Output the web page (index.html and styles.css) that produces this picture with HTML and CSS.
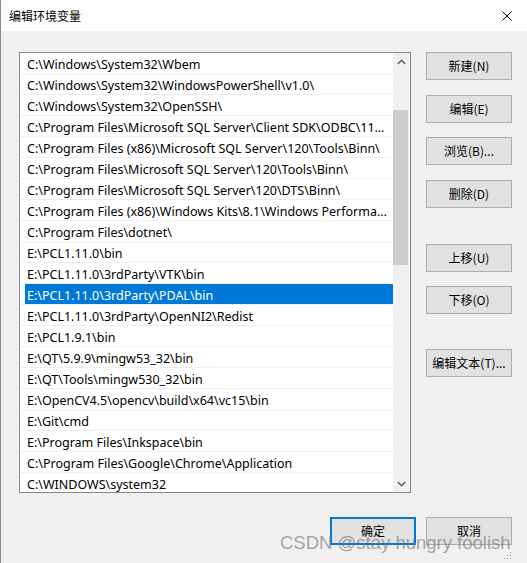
FILE: index.html
```html
<!DOCTYPE html>
<html lang="zh-CN">
<head>
<meta charset="utf-8">
<title>编辑环境变量</title>
<link rel="stylesheet" href="styles.css">
</head>
<body>
<div class="window">
  <div class="titlebar">
    <span class="title">编辑环境变量</span>
    <svg class="close" width="10" height="10" viewBox="0 0 10 10"><path d="M0.5 0.5 L9.5 9.5 M9.5 0.5 L0.5 9.5" stroke="#000" stroke-width="1" fill="none"/></svg>
  </div>
  <div class="content">
    <div class="main">
      <div class="listbox">
        <div class="rows">
          <div class="row"><div class="cell">C:\Windows\System32\Wbem</div></div>
          <div class="row"><div class="cell">C:\Windows\System32\WindowsPowerShell\v1.0\</div></div>
          <div class="row"><div class="cell">C:\Windows\System32\OpenSSH\</div></div>
          <div class="row"><div class="cell">C:\Program Files\Microsoft SQL Server\Client SDK\ODBC\110\Tools\Binn\</div></div>
          <div class="row"><div class="cell">C:\Program Files (x86)\Microsoft SQL Server\120\Tools\Binn\</div></div>
          <div class="row"><div class="cell">C:\Program Files\Microsoft SQL Server\120\Tools\Binn\</div></div>
          <div class="row"><div class="cell">C:\Program Files\Microsoft SQL Server\120\DTS\Binn\</div></div>
          <div class="row"><div class="cell">C:\Program Files (x86)\Windows Kits\8.1\Windows Performance Toolkit\</div></div>
          <div class="row"><div class="cell">C:\Program Files\dotnet\</div></div>
          <div class="row"><div class="cell">E:\PCL1.11.0\bin</div></div>
          <div class="row"><div class="cell">E:\PCL1.11.0\3rdParty\VTK\bin</div></div>
          <div class="row"><div class="cell selected">E:\PCL1.11.0\3rdParty\PDAL\bin</div></div>
          <div class="row"><div class="cell">E:\PCL1.11.0\3rdParty\OpenNI2\Redist</div></div>
          <div class="row"><div class="cell">E:\PCL1.9.1\bin</div></div>
          <div class="row"><div class="cell">E:\QT\5.9.9\mingw53_32\bin</div></div>
          <div class="row"><div class="cell">E:\QT\Tools\mingw530_32\bin</div></div>
          <div class="row"><div class="cell">E:\OpenCV4.5\opencv\build\x64\vc15\bin</div></div>
          <div class="row"><div class="cell">E:\Git\cmd</div></div>
          <div class="row"><div class="cell">E:\Program Files\Inkspace\bin</div></div>
          <div class="row"><div class="cell">C:\Program Files\Google\Chrome\Application</div></div>
          <div class="row"><div class="cell">C:\WINDOWS\system32</div></div>
        </div>
        <div class="scrollbar">
          <div class="arrow">
            <svg width="9" height="6" viewBox="0 0 9 6"><path d="M0.8 5 L4.5 1.3 L8.2 5" stroke="#606060" stroke-width="1.6" fill="none"/></svg>
          </div>
          <div class="track">
            <div class="thumb"></div>
          </div>
          <div class="arrow">
            <svg width="9" height="6" viewBox="0 0 9 6"><path d="M0.8 1 L4.5 4.7 L8.2 1" stroke="#606060" stroke-width="1.6" fill="none"/></svg>
          </div>
        </div>
      </div>
      <div class="side">
        <button class="btn">新建(N)</button>
        <button class="btn g15">编辑(E)</button>
        <button class="btn g14">浏览(B)...</button>
        <button class="btn g15">删除(D)</button>
        <button class="btn g36">上移(U)</button>
        <button class="btn g14">下移(O)</button>
        <button class="btn g35">编辑文本(T)...</button>
      </div>
    </div>
    <div class="footer">
      <button class="btn default">确定</button>
      <button class="btn">取消</button>
    </div>
  </div>
  <div class="watermark">CSDN @stay hungry foolish</div>
  <svg class="grip" width="8" height="8" viewBox="0 0 8 8">
    <rect x="6" y="0" width="1" height="1" fill="#a0a0a0"/>
    <rect x="3" y="3" width="1" height="1" fill="#a0a0a0"/>
    <rect x="6" y="3" width="1" height="1" fill="#a0a0a0"/>
    <rect x="0" y="6" width="1" height="1" fill="#a0a0a0"/>
    <rect x="3" y="6" width="1" height="1" fill="#a0a0a0"/>
    <rect x="6" y="6" width="1" height="1" fill="#a0a0a0"/>
  </svg>
</div>
</body>
</html>
```

FILE: styles.css
```css
* { box-sizing: border-box; }
html, body {
  margin: 0;
  padding: 0;
  background: #f0f0f0;
}
body {
  font-family: "Noto Sans", "Noto Sans CJK SC", sans-serif;
  font-size: 12px;
  color: #000;
}
.window {
  position: relative;
  width: 527px;
  height: 563px;
  background: #f0f0f0;
  border-left: 1px solid #8a8a8a;
  overflow: hidden;
}
.titlebar {
  height: 31px;
  background: #fff;
  display: flex;
  align-items: center;
  justify-content: space-between;
  padding: 0 15px 0 8px;
}
.title {
  font-family: "Noto Sans CJK SC", sans-serif;
  font-size: 12px;
  line-height: 16px;
}
.close { display: block; }
.content {
  padding: 21px 15px 0 18px;
}
.main {
  display: flex;
  gap: 15px;
}
.listbox {
  width: 392px;
  height: 441px;
  border: 1px solid #828790;
  background: #fff;
  display: flex;
  overflow: hidden;
}
.rows {
  flex: 1;
  min-width: 0;
}
.row {
  height: 21px;
  margin-left: 1px;
  border-bottom: 1px solid #ededed;
  display: flex;
}
.cell {
  flex: 1;
  min-width: 0;
  height: 20px;
  margin-left: 4px;
  padding: 3px 4px 0 2px;
  font-size: 12.5px;
  line-height: 17px;
  white-space: nowrap;
  overflow: hidden;
  text-overflow: ellipsis;
}
.cell.selected {
  background: #0078d7;
  color: #fff;
}
.scrollbar {
  width: 17px;
  background: #f0f0f0;
  display: flex;
  flex-direction: column;
}
.arrow {
  height: 17px;
  display: flex;
  align-items: center;
  justify-content: center;
}
.track {
  flex: 1;
  padding-top: 40px;
}
.thumb {
  width: 15px;
  height: 155px;
  background: #cdcdcd;
}
.side {
  width: 86px;
  display: flex;
  flex-direction: column;
}
.btn {
  width: 86px;
  height: 28px;
  margin: 0;
  padding: 0;
  border: 1px solid #adadad;
  background: #e1e1e1;
  font-family: "Noto Sans CJK SC", sans-serif;
  font-size: 12px;
  color: #000;
  line-height: 16px;
}
.g14 { margin-top: 14px; }
.g15 { margin-top: 15px; }
.g35 { margin-top: 35px; }
.g36 { margin-top: 36px; }
.footer {
  display: flex;
  justify-content: flex-end;
  gap: 10px;
  margin-top: 24px;
}
.btn.default {
  border: 2px solid #0078d7;
}
.watermark {
  position: absolute;
  left: 279px;
  top: 532px;
  font-family: "Liberation Sans", Arial, sans-serif;
  font-size: 18.5px;
  color: rgba(110, 110, 110, 0.6);
  white-space: nowrap;
}
.grip {
  position: absolute;
  right: 15px;
  bottom: 3px;
}
```
